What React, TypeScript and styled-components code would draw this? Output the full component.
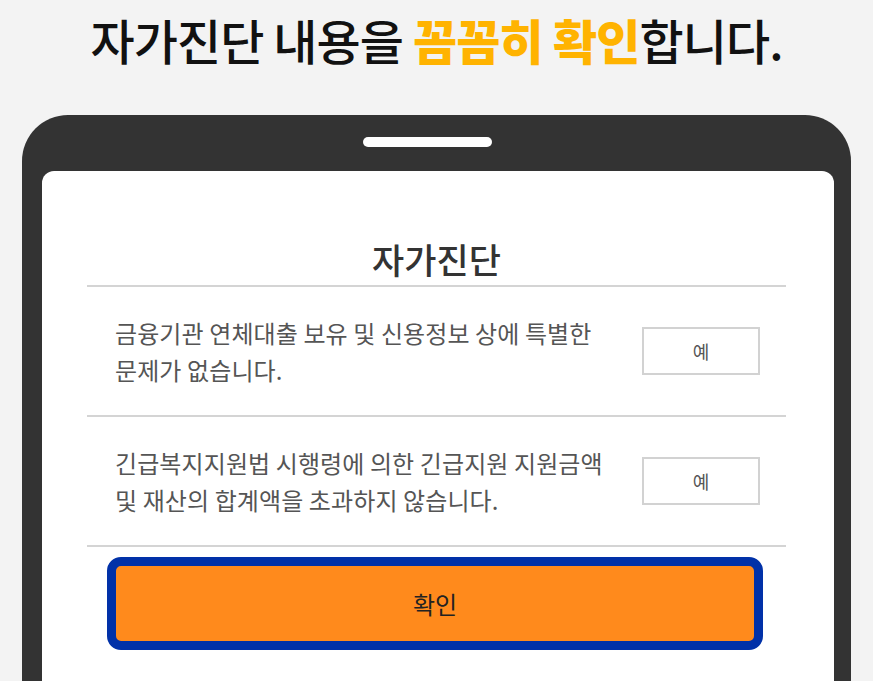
import styled, { createGlobalStyle } from "styled-components";

const GlobalStyle = createGlobalStyle`
  html, body {
    margin: 0;
    padding: 0;
    background: #f3f3f3;
    overflow: hidden;
  }
  body {
    font-family: "Noto Sans CJK KR", "Noto Sans", sans-serif;
  }
`;

const Page = styled.main`
  width: 873px;
  height: 681px;
  overflow: hidden;
`;

const Headline = styled.h1`
  margin: 13px 0 50px;
  text-align: center;
  font-size: 48px;
  line-height: 52px;
  font-weight: 500;
  letter-spacing: -0.9px;
  color: #111;
`;

const Accent = styled.span`
  color: #ffb300;
  font-weight: 900;
`;

const Phone = styled.section`
  margin-left: 22px;
  width: 829px;
  height: 600px;
  box-sizing: border-box;
  padding: 56px 17px 0 20px;
  background: #333333;
  border-radius: 46px 46px 0 0;
  position: relative;
`;

const Speaker = styled.span`
  position: absolute;
  top: 22px;
  left: 341px;
  width: 129px;
  height: 10px;
  border-radius: 5px;
  background: #fff;
`;

const Screen = styled.div`
  height: 100%;
  background: #fff;
  border-radius: 12px 12px 0 0;
  padding: 0 48px 0 45px;
`;

const Title = styled.h2`
  margin: 0;
  padding: 64px 0 2px;
  line-height: 48px;
  text-align: center;
  font-size: 35px;
  font-weight: 500;
  color: #333;
  border-bottom: 2px solid #d4d4d4;
`;

const Row = styled.div`
  height: 128px;
  display: flex;
  align-items: center;
  justify-content: space-between;
  padding: 0 26px 0 28px;
  border-bottom: 2px solid #d4d4d4;
`;

const Question = styled.p`
  margin: 0;
  font-size: 24px;
  line-height: 37px;
  letter-spacing: 0.1px;
  font-weight: 400;
  color: #555;
`;

const YesBox = styled.button`
  flex: none;
  width: 118px;
  height: 48px;
  border: 2px solid #d2d2d2;
  background: #fff;
  font-family: inherit;
  font-size: 18px;
  color: #555;
  padding: 0;
`;

const Confirm = styled.button`
  display: block;
  margin: 10px 23px 0 20px;
  width: calc(100% - 43px);
  height: 93px;
  box-sizing: border-box;
  border: 9px solid #0131a8;
  border-radius: 14px;
  background: #ff8a1c;
  font-family: inherit;
  font-size: 24px;
  color: #222;
  padding: 0;
`;

const questions = [
  ["금융기관 연체대출 보유 및 신용정보 상에 특별한", "문제가 없습니다."],
  ["긴급복지지원법 시행령에 의한 긴급지원 지원금액", "및 재산의 합계액을 초과하지 않습니다."],
];

export default function App() {
  return (
    <Page>
      <GlobalStyle />
      <Headline>
        자가진단 내용을 <Accent>꼼꼼히 확인</Accent>합니다.
      </Headline>
      <Phone>
        <Speaker />
        <Screen>
          <Title>자가진단</Title>
          {questions.map((q, i) => (
            <Row key={i}>
              <Question>
                {q[0]}
                <br />
                {q[1]}
              </Question>
              <YesBox>예</YesBox>
            </Row>
          ))}
          <Confirm>확인</Confirm>
        </Screen>
      </Phone>
    </Page>
  );
}
